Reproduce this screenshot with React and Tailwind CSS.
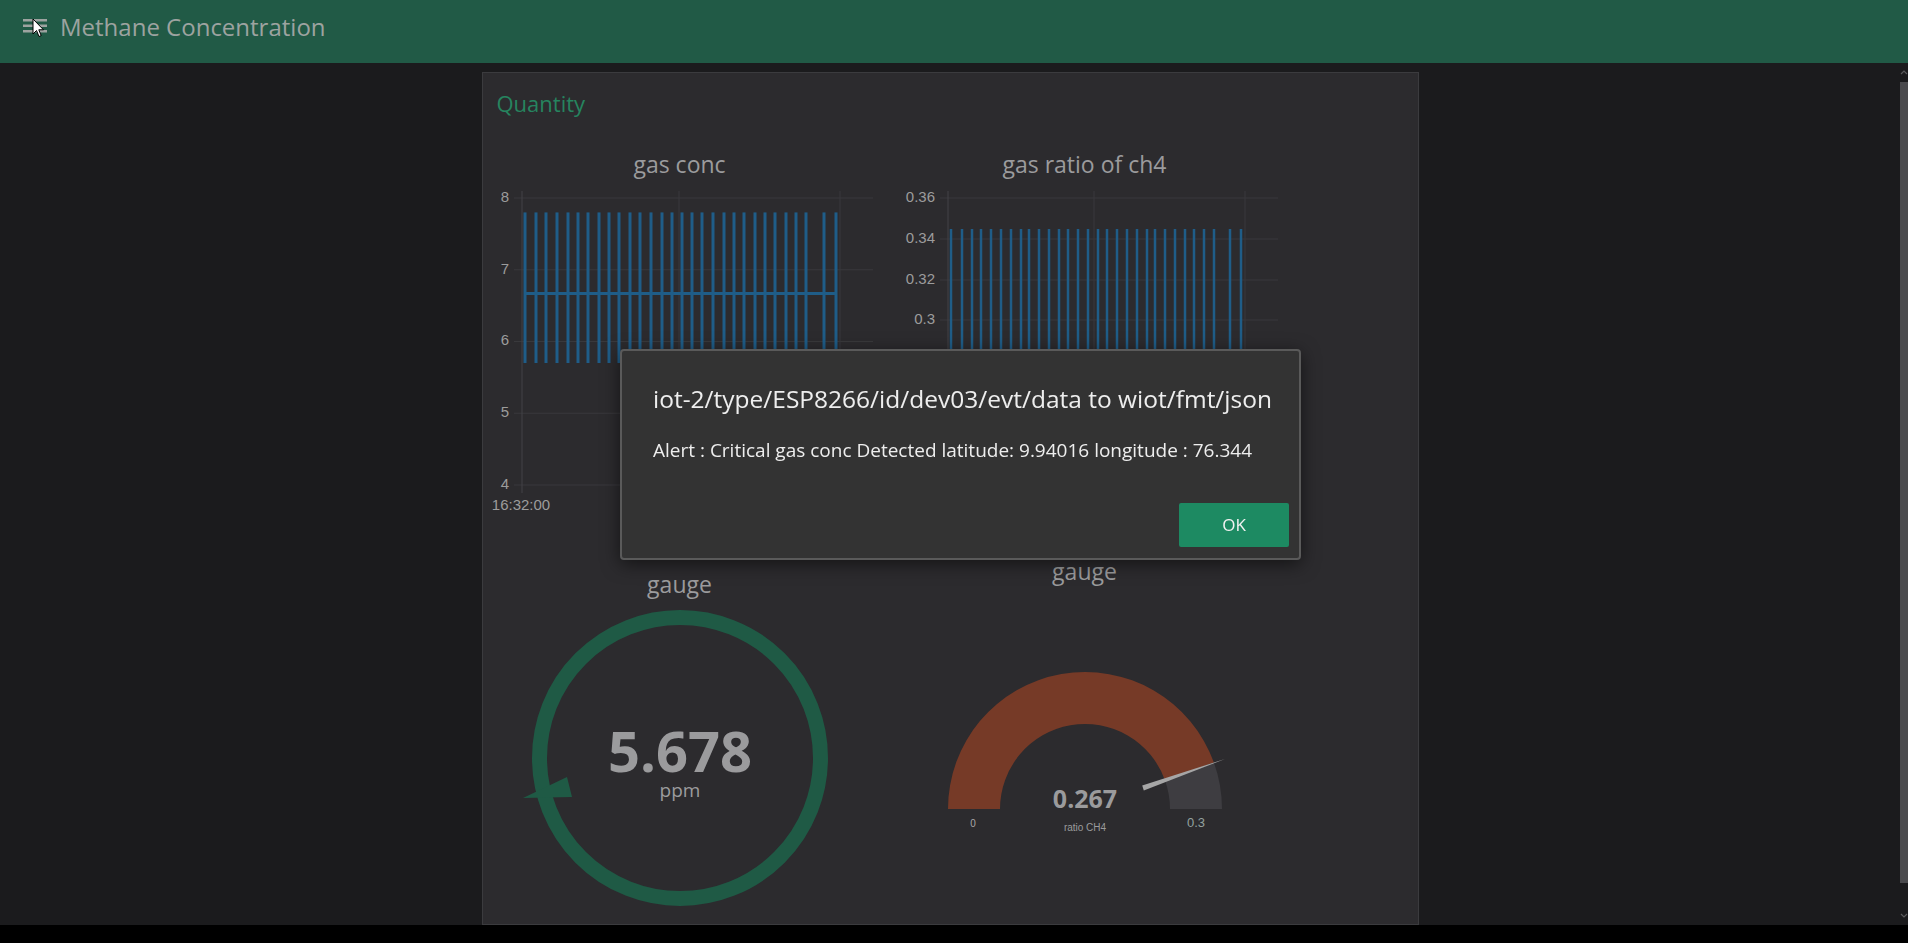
import React from 'react'

// x positions of the spikes in both history charts (px inside each chart svg)
const GAS_BARS = [35, 46, 56, 67, 78, 88, 98, 109, 119, 129, 140, 150, 161, 172, 182, 192, 202, 212, 223, 234, 244, 254, 265, 275, 285, 296, 306, 316, 334, 346]
const RATIO_BARS = [56, 67, 77, 86, 96, 106, 116, 126, 134, 144, 154, 164, 173, 183, 193, 203, 212, 222, 232, 242, 252, 260, 270, 280, 290, 299, 309, 319, 335, 346]

const axisFont = { fontFamily: '"Liberation Sans", Arial, sans-serif' }

const MenuIcon = () => (
  <svg width="24" height="16" viewBox="0 0 24 16" className="shrink-0">
    <rect x="0" y="0" width="24" height="2.5" fill="#9da3a0" />
    <rect x="0" y="5.5" width="24" height="2.5" fill="#9da3a0" />
    <rect x="0" y="11" width="24" height="2.5" fill="#9da3a0" />
  </svg>
)

const Cursor = () => (
  <svg className="absolute left-[32px] top-[18px]" width="13" height="21" viewBox="0 0 13 21">
    <path d="M1 1 L1 16 L4.5 12.5 L7 18.5 L9.2 17.6 L6.8 11.8 L11.5 11.8 Z" fill="#fff" stroke="#000" strokeWidth="1" strokeLinejoin="round" />
  </svg>
)

const GasChart = () => {
  const yTicks = [[8, 13], [7, 84.75], [6, 156.5], [5, 228.25], [4, 300]]
  return (
    <svg width="390" height="330" className="block overflow-visible">
      {yTicks.map(([v, y]) => (
        <g key={v}>
          <line x1="24" x2="383" y1={y} y2={y} stroke="#39393c" strokeWidth="1" />
          <text x="19" y={y} textAnchor="end" dominantBaseline="middle" fontSize="15" fill="#9c9c9c" style={axisFont}>{v}</text>
        </g>
      ))}
      {[32, 189, 350].map(x => (
        <line key={x} x1={x} x2={x} y1="6" y2="308" stroke={x === 32 ? '#434346' : '#39393c'} strokeWidth="1" />
      ))}
      <text x="31" y="321" textAnchor="middle" dominantBaseline="middle" fontSize="15" fill="#9c9c9c" style={axisFont}>16:32:00</text>
      <line x1="35" x2="346" y1="108.4" y2="108.4" stroke="#1f5d88" strokeWidth="3" />
      {GAS_BARS.map(x => (
        <line key={x} x1={x} x2={x} y1="27.4" y2="178" stroke="#1f5d88" strokeWidth="3" />
      ))}
    </svg>
  )
}

const RatioChart = () => {
  const yTicks = [['0.36', 13], ['0.34', 54], ['0.32', 95], ['0.3', 135], ['0.28', 176], ['0.26', 217], ['0.24', 258], ['0.22', 300]]
  return (
    <svg width="390" height="330" className="block overflow-visible">
      {yTicks.map(([v, y]) => (
        <g key={v}>
          <line x1="45" x2="383" y1={y} y2={y} stroke="#39393c" strokeWidth="1" />
          <text x="40" y={y} textAnchor="end" dominantBaseline="middle" fontSize="15" fill="#9c9c9c" style={axisFont}>{v}</text>
        </g>
      ))}
      {[53, 199, 350].map(x => (
        <line key={x} x1={x} x2={x} y1="6" y2="308" stroke={x === 53 ? '#434346' : '#39393c'} strokeWidth="1" />
      ))}
      <text x="53" y="321" textAnchor="middle" dominantBaseline="middle" fontSize="15" fill="#9c9c9c" style={axisFont}>16:32:00</text>
      <line x1="56" x2="346" y1="190" y2="190" stroke="#1f5d88" strokeWidth="2.5" />
      {RATIO_BARS.map(x => (
        <line key={x} x1={x} x2={x} y1="44" y2="240" stroke="#1f5d88" strokeWidth="2.5" />
      ))}
    </svg>
  )
}

const DonutGauge = () => (
  <svg width="380" height="320" className="block">
    <circle cx="190" cy="159" r="140.5" fill="none" stroke="#1f5a45" strokeWidth="15" />
    <polygon points="33,199 77,178 82,198" fill="#1f5a45" />
    <text x="190" y="173" textAnchor="middle" fontSize="56" fontWeight="700" fill="#9b9b9d" style={{ fontFamily: '"Open Sans", sans-serif' }}>5.678</text>
    <text x="190" y="198" textAnchor="middle" fontSize="19" fill="#9b9b9d" style={{ fontFamily: '"Open Sans", sans-serif' }}>ppm</text>
  </svg>
)

const pt = (cx, cy, rad, th) => [cx - rad * Math.cos(th), cy - rad * Math.sin(th)]

const HalfGauge = () => {
  const cx = 190
  const cy = 223
  const R = 137
  const r = 85
  const tv = (0.267 / 0.3) * Math.PI
  const f = p => `${p[0].toFixed(2)} ${p[1].toFixed(2)}`
  const band = (a, b) =>
    `M ${f(pt(cx, cy, R, a))} A ${R} ${R} 0 0 1 ${f(pt(cx, cy, R, b))} L ${f(pt(cx, cy, r, b))} A ${r} ${r} 0 0 0 ${f(pt(cx, cy, r, a))} Z`
  return (
    <svg width="380" height="260" className="block">
      <path d={band(0, tv)} fill="#763a27" />
      <path d={band(tv, Math.PI)} fill="#3e3d41" />
      <polygon points="248.8,204.6 247.2,199.4 330,173" fill="#a6a6a6" />
      <text x="190" y="222" textAnchor="middle" fontSize="25" fontWeight="700" fill="#9b9b9d" style={{ fontFamily: '"Open Sans", sans-serif' }}>0.267</text>
      <text x="190" y="245" textAnchor="middle" fontSize="10" fill="#9b9b9d" style={axisFont}>ratio CH4</text>
      <text x="78" y="241" textAnchor="middle" fontSize="10" fill="#a8a8a8" style={axisFont}>0</text>
      <text x="301" y="241" textAnchor="middle" fontSize="13" fill="#93a19e" style={axisFont}>0.3</text>
    </svg>
  )
}

const WidgetTitle = ({ children }) => (
  <div className="w-[380px] h-[30px] text-center text-[23px] leading-[30px] text-[#9b9b9d]">{children}</div>
)

export default function App() {
  return (
    <div className="h-screen flex flex-col bg-[#1b1b1d] overflow-hidden" style={{ fontFamily: '"Open Sans", "Noto Sans", sans-serif' }}>
      {/* Toolbar */}
      <header className="relative h-[63px] shrink-0 bg-[#215a46] flex items-center pb-[9px] pl-[23px]">
        <MenuIcon />
        <span className="ml-[13px] text-[24px] leading-[30px] text-[#9da3a0]">Methane Concentration</span>
        <Cursor />
      </header>

      <div className="flex-1 flex min-h-0">
        <main className="flex-1 flex justify-center pt-[9px] min-h-0">
          {/* Quantity group */}
          <section className="w-[937px] h-full overflow-hidden bg-[#2c2b2e] border border-[#3b3b3e]">
            <div className="pl-[14px] pt-[15px] text-[22px] leading-[30px] text-[#26845f]">Quantity</div>

            <div className="mt-[31px] pl-[7px] grid grid-cols-[390px_390px] gap-x-[15px]">
              <div>
                <WidgetTitle>gas conc</WidgetTitle>
                <div className="mt-[6px]"><GasChart /></div>
              </div>
              <div>
                <WidgetTitle>gas ratio of ch4</WidgetTitle>
                <div className="mt-[6px]"><RatioChart /></div>
              </div>
            </div>

            <div className="mt-[41px] pl-[7px] grid grid-cols-[380px_380px] gap-x-[25px] items-start">
              <div className="pt-[13px]">
                <WidgetTitle>gauge</WidgetTitle>
                <DonutGauge />
              </div>
              <div>
                <WidgetTitle>gauge</WidgetTitle>
                <HalfGauge />
              </div>
            </div>
          </section>
        </main>

        {/* Scrollbar */}
        <div className="w-[8px] shrink-0 flex flex-col items-center pt-[6px] pb-[6px]">
          <svg width="8" height="6" viewBox="0 0 8 6"><path d="M1 5 L4 2 L7 5" fill="none" stroke="#5a5a5c" strokeWidth="1.2" /></svg>
          <div className="mt-[7px] w-full flex-1 bg-[#4a4a4d]" />
          <div className="h-[30px]" />
          <svg width="8" height="6" viewBox="0 0 8 6"><path d="M1 1 L4 4 L7 1" fill="none" stroke="#5a5a5c" strokeWidth="1.2" /></svg>
        </div>
      </div>

      <div className="h-[18px] shrink-0 bg-black" />

      {/* Notification dialog */}
      <div className="fixed left-[620px] top-[349px] w-[681px] h-[211px] bg-[#333333] border-2 border-[#5a5a5a] rounded-[4px] shadow-[0_4px_18px_rgba(0,0,0,0.55)] flex flex-col">
        <div className="px-[31px] pt-[32px]">
          <div className="text-[24.5px] leading-[32px] text-[#eeeeee] whitespace-nowrap">iot-2/type/ESP8266/id/dev03/evt/data to wiot/fmt/json</div>
          <div className="mt-[23px] text-[19px] leading-[24px] text-[#eeeeee] whitespace-nowrap">Alert : Critical gas conc Detected latitude: 9.94016 longitude : 76.344</div>
        </div>
        <div className="mt-auto flex justify-end px-[10px] pb-[11px]">
          <button className="w-[110px] h-[44px] bg-[#1d8a62] rounded-[2px] text-[17px] text-[#f2f2f2]">OK</button>
        </div>
      </div>
    </div>
  )
}
